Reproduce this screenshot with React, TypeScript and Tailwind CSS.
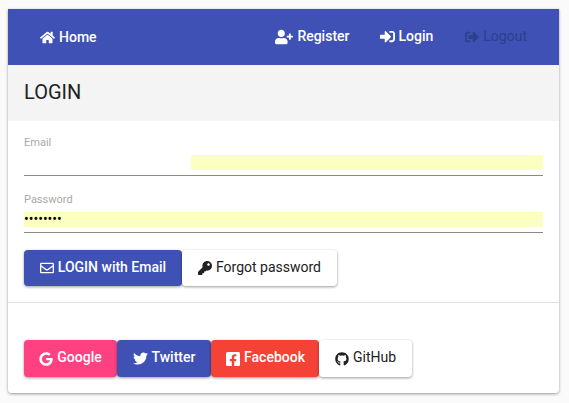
import type { ReactNode } from 'react'
import {
  FaHome,
  FaUserPlus,
  FaSignInAlt,
  FaSignOutAlt,
  FaRegEnvelope,
  FaKey,
  FaGoogle,
  FaTwitter,
  FaFacebookSquare,
  FaGithub,
} from 'react-icons/fa'

function NavLink({ icon, label, className }: { icon: ReactNode; label: string; className: string }) {
  return (
    <a className={`flex items-center gap-[4px] text-[14px] font-medium ${className}`}>
      {icon}
      {label}
    </a>
  )
}

function ActionButton({ icon, label, className }: { icon: ReactNode; label: string; className: string }) {
  return (
    <button
      className={`flex items-center justify-center gap-[4px] rounded-[4px] text-[14px] font-medium shadow-[0_1px_3px_rgba(0,0,0,0.4)] ${className}`}
    >
      {icon}
      <span className="-mt-[2px]">{label}</span>
    </button>
  )
}

export default function App() {
  return (
    <div className="h-[403px] overflow-hidden bg-[#fafafa] px-[8px] pt-[9px] font-['Roboto',sans-serif]">
      <div className="h-[384px] w-[551px] rounded-b-[4px] bg-[#f4f4f4] shadow-[0_1px_3px_rgba(0,0,0,0.4)]">
        <nav className="flex h-[56px] items-center bg-[#3f51b5] pl-[32px] text-white">
          <NavLink icon={<FaHome size={15} />} label="Home" className="mt-[1px]" />
          <div className="-mt-[1px] ml-auto flex items-center">
            <NavLink icon={<FaUserPlus size={18} />} label="Register" className="mr-[30px]" />
            <NavLink icon={<FaSignInAlt size={15} />} label="Login" className="mr-[32px]" />
            <NavLink
              icon={<FaSignOutAlt size={14} />}
              label="Logout"
              className="mr-[32px] font-normal text-[#303f8c]"
            />
          </div>
        </nav>

        <div className="flex h-[56px] items-center px-[16px] pb-[2px] text-[20px] text-[#212121]">LOGIN</div>

        <div className="h-[272px] rounded-b-[4px] bg-white">
          <div className="px-[16px] pt-[15px]">
            <label className="block text-[11px] leading-[13px] text-[#a8a8a8]">Email</label>
            <div className="mt-[6px] border-b border-[#8a8a8a] pb-[5px]">
              <input className="ml-[167px] block h-[15px] w-[352px] bg-[#fbffbf] outline-none" readOnly />
            </div>
            <label className="mt-[17px] block text-[11px] leading-[13px] text-[#a8a8a8]">Password</label>
            <div className="mt-[6px] border-b border-[#8a8a8a] pb-[5px]">
              <input
                type="password"
                defaultValue="password"
                readOnly
                className="block h-[15px] w-full bg-[#fbffbf] text-[14px] text-black outline-none"
              />
            </div>
            <div className="mt-[17px] flex h-[36px]">
              <ActionButton
                icon={<FaRegEnvelope size={14} />}
                label="LOGIN with Email"
                className="w-[158px] bg-[#3f51b5] text-white"
              />
              <ActionButton
                icon={<FaKey size={14} />}
                label="Forgot password"
                className="w-[155px] bg-white font-normal text-[#212121]"
              />
            </div>
          </div>

          <div className="mt-[16px] border-t border-[#e0e0e0] px-[16px] pt-[37px]">
            <div className="flex h-[37px]">
              <ActionButton icon={<FaGoogle size={14} />} label="Google" className="w-[93px] bg-[#ff4081] text-white" />
              <ActionButton icon={<FaTwitter size={15} />} label="Twitter" className="w-[94px] bg-[#3f51b5] text-white" />
              <ActionButton
                icon={<FaFacebookSquare size={16} className="-mr-[1px]" />}
                label="Facebook"
                className="w-[108px] bg-[#f44336] text-white"
              />
              <ActionButton
                icon={<FaGithub size={14} />}
                label="GitHub"
                className="w-[93px] bg-white font-normal text-[#212121]"
              />
            </div>
          </div>
        </div>
      </div>
    </div>
  )
}
